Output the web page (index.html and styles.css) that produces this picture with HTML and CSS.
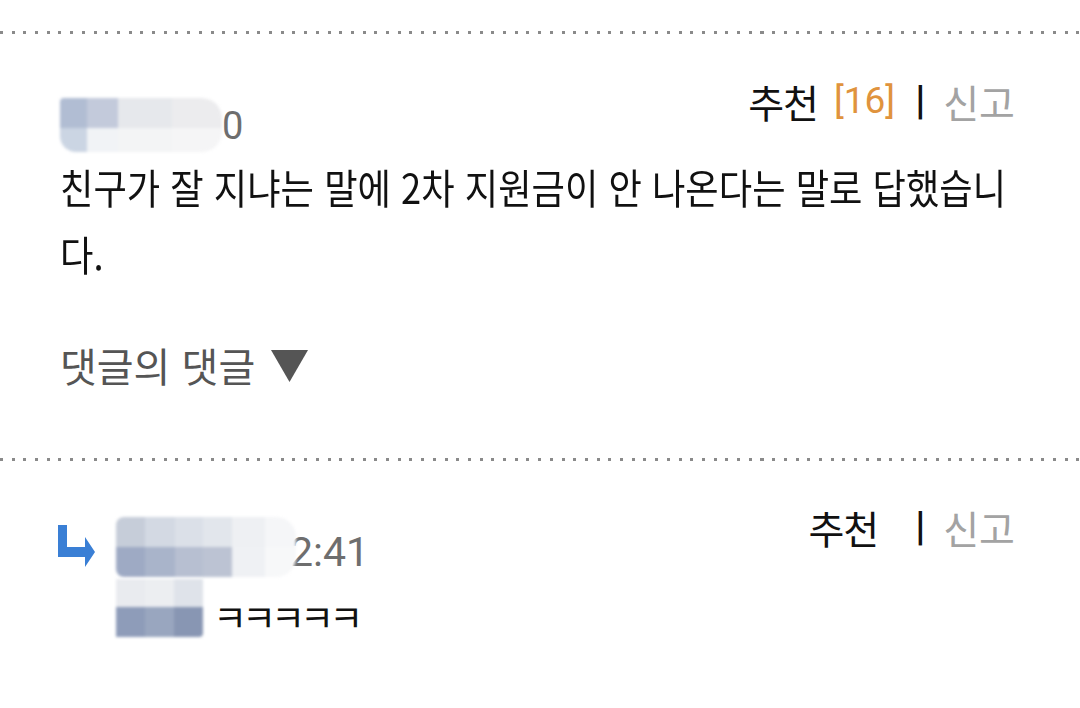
FILE: index.html
```html
<!DOCTYPE html>
<html lang="ko">
<head>
<meta charset="utf-8">
<link rel="stylesheet" href="styles.css">
</head>
<body>
<div class="sep sep-top"></div>
<section class="comment">
  <div class="head">
    <div class="user">
      <div class="blur blur-a">
        <span class="cell a1"></span><span class="cell a2"></span><span class="cell a3"></span><span class="cell a4"></span>
        <span class="cell a5"></span><span class="cell a6"></span><span class="cell a7"></span><span class="cell a8"></span>
      </div>
      <span class="meta">0</span>
    </div>
    <div class="actions">
      <span class="rec">추천</span>
      <span class="count">[16]</span>
      <span class="bar">|</span>
      <span class="report">신고</span>
    </div>
  </div>
  <p class="text">친구가 잘 지냐는 말에 2차 지원금이 안 나온다는 말로 답했습니다.</p>
  <div class="toggle">
    <span class="toggle-label">댓글의 댓글</span>
    <svg class="tri" width="37" height="32" viewBox="0 0 37 32"><path d="M0 0 H37 L18.5 32 Z" fill="#555555"/></svg>
  </div>
</section>
<div class="sep sep-mid"></div>
<section class="reply">
  <div class="head">
    <div class="user">
      <svg class="arrow" width="38" height="43" viewBox="0 0 38 43">
        <path d="M0 0 H9 V22 H27 V12 L37 27 L27 42 V32 H0 Z" fill="#3a7fd5"/>
      </svg>
      <div class="blur blur-b">
        <span class="cell b1"></span><span class="cell b2"></span><span class="cell b3"></span><span class="cell b4"></span><span class="cell b5"></span><span class="cell b6"></span>
        <span class="cell b7"></span><span class="cell b8"></span><span class="cell b9"></span><span class="cell b10"></span><span class="cell b11"></span><span class="cell b12"></span>
      </div>
      <span class="meta time">2:41</span>
    </div>
    <div class="actions">
      <span class="rec">추천</span>
      <span class="count empty"></span>
      <span class="bar">|</span>
      <span class="report">신고</span>
    </div>
  </div>
  <div class="reply-body">
    <div class="blur blur-c">
      <span class="cell c1"></span><span class="cell c2"></span><span class="cell c3"></span>
      <span class="cell c4"></span><span class="cell c5"></span><span class="cell c6"></span>
    </div>
    <span class="laugh">ㅋㅋㅋㅋㅋ</span>
  </div>
</section>
</body>
</html>
```
FILE: styles.css
```css
html, body {
  margin: 0;
  padding: 0;
  background: #ffffff;
}
body {
  width: 1080px;
  height: 708px;
  overflow: hidden;
  font-family: "Noto Sans CJK KR", "Noto Sans", sans-serif;
  color: #111;
}
.sep {
  height: 3px;
  background-image: repeating-linear-gradient(to right, #8a8a8a 0 3px, transparent 3px 11.7px);
}
.sep-top { margin-top: 31px; }
.comment {
  padding: 42px 65px 0 60px;
}
.head {
  display: flex;
  justify-content: space-between;
  align-items: flex-start;
}
.user {
  display: flex;
  align-items: flex-start;
}
.comment .user { margin-top: 22px; }
.blur {
  display: grid;
  filter: blur(1.5px);
}
.blur-a {
  grid-template-columns: 27px 31px 54px 50px;
  grid-template-rows: 30px 24px;
  width: 162px;
  border-radius: 4px 20px 20px 16px;
  overflow: hidden;
}
.a1 { background: #b1bdd3; }
.a2 { background: #c3cadb; }
.a3 { background: #e6e8ec; }
.a4 { background: #ececee; border-radius: 0 20px 0 0; }
.a5 { background: #cbd5e3; }
.a6 { background: #f1f3f6; }
.a7 { background: #f3f4f5; }
.a8 { background: #f5f5f6; border-radius: 0 0 20px 0; }
.meta {
  font-family: "Roboto", "Noto Sans CJK KR", sans-serif;
  font-size: 38px;
  color: #6e6e6e;
  line-height: 38px;
  margin-top: 9px;
}
.actions {
  display: flex;
  align-items: center;
  font-size: 39px;
  line-height: 50px;
}
.rec { color: #111; letter-spacing: -1px; }
.count {
  color: #e0933d;
  font-family: "Roboto", sans-serif;
  margin-left: 16px;
  font-size: 37px;
}
.count.empty { width: 17px; margin-left: 0; }
.bar {
  margin: 0 18px 0 20px;
  font-family: "Roboto", sans-serif;
  font-weight: 700;
  font-size: 40px;
}
.report { color: #a3a3a3; }
.text {
  margin: 1px 0 0 0;
  width: 1085px;
  font-size: 41px;
  line-height: 67px;
  color: #111;
  transform: scaleX(0.885);
  transform-origin: 0 0;
}
.toggle {
  margin-top: 53px;
  display: flex;
  align-items: center;
  font-size: 40px;
  line-height: 50px;
  color: #555;
}
.toggle-label { letter-spacing: 0; }
.tri { margin-left: 16px; margin-top: 2px; }
.sep-mid { margin-top: 68px; }
.reply {
  padding: 41px 65px 0 58px;
}
.reply .user { margin-top: 15px; }
.arrow { flex: none; margin-top: 8px; }
.blur-b {
  grid-template-columns: 29px 30px 28px 29px 33px 31px;
  grid-template-rows: 30px 30px;
  width: 180px;
  margin-left: 20px;
  border-radius: 8px 20px 20px 8px;
  overflow: hidden;
}
.b1 { background: #c6cdd9; }
.b2 { background: #d3d9e3; }
.b3 { background: #dbe0e8; }
.b4 { background: #e2e6ec; }
.b5 { background: #eef0f3; }
.b6 { background: #f5f6f8; }
.b7 { background: #9eaac4; }
.b8 { background: #a9b4ca; }
.b9 { background: #b7bfd1; }
.b10 { background: #bcc3d3; }
.b11 { background: #eff1f4; }
.b12 { background: #f7f8f9; }
.time {
  font-size: 41px;
  line-height: 40px;
  margin-left: -6px;
  margin-top: 15px;
}
.reply-body {
  display: flex;
  align-items: flex-end;
  margin-left: 58px;
  margin-top: 2px;
}
.blur-c {
  grid-template-columns: 29px 29px 29px;
  grid-template-rows: 28px 30px;
  width: 87px;
  border-radius: 0 0 4px 0;
  overflow: hidden;
}
.c1 { background: #e9ebef; }
.c2 { background: #eceef1; }
.c3 { background: #dfe3ea; }
.c4 { background: #8e9cb9; }
.c5 { background: #99a6bf; }
.c6 { background: #8896b3; }
.laugh {
  font-size: 37px;
  line-height: 42px;
  letter-spacing: -5px;
  margin-left: 10px;
  margin-bottom: 0;
  color: #111;
}
```
